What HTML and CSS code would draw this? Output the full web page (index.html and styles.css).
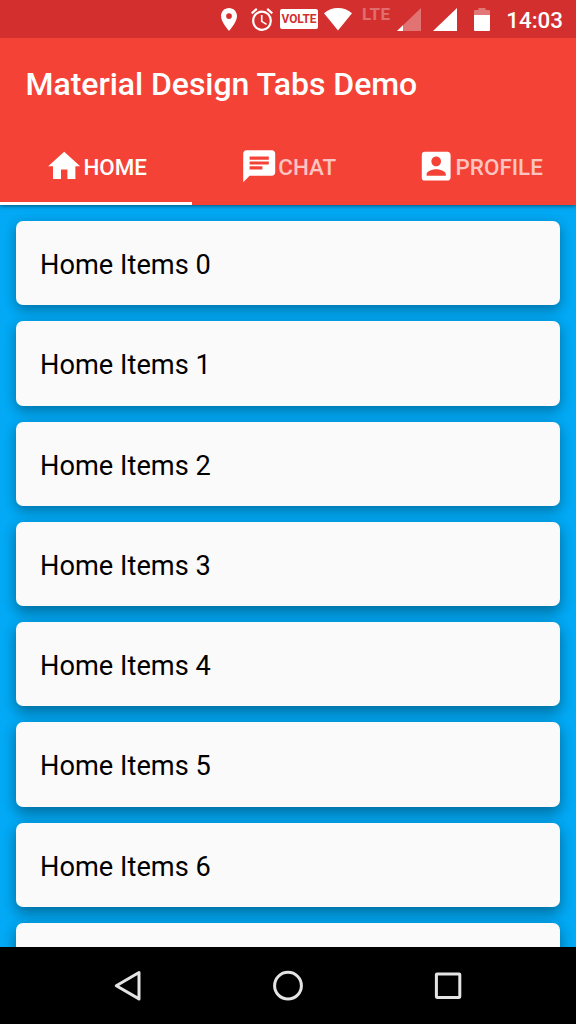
FILE: index.html
```html
<!DOCTYPE html>
<html lang="en">
<head>
<meta charset="utf-8">
<title>Material Design Tabs Demo</title>
<link rel="stylesheet" href="styles.css">
</head>
<body>
<div class="status">
  <svg class="pin" width="16" height="23" viewBox="5 2 14 20" preserveAspectRatio="none"><path fill="#fff" d="M12 2C8.13 2 5 5.13 5 9c0 5.25 7 13 7 13s7-7.75 7-13c0-3.87-3.13-7-7-7zm0 9.500a2.500 2.500 0 0 1 0-5 2.500 2.500 0 0 1 0 5z"/></svg>
  <svg class="alarm" width="22" height="23" viewBox="2 1.860 20 20.140" preserveAspectRatio="none"><path fill="#fff" d="M22 5.720l-4.600-3.860-1.290 1.530 4.600 3.860L22 5.720zM7.880 3.390L6.600 1.860 2 5.710l1.290 1.530 4.590-3.850zM12.500 8H11v6l4.750 2.850.75-1.230-4-2.370V8zM12 4c-4.970 0-9 4.030-9 9s4.020 9 9 9a9 9 0 0 0 0-18zm0 16c-3.870 0-7-3.130-7-7s3.130-7 7-7 7 3.130 7 7-3.130 7-7 7z"/></svg>
  <span class="volte">VOLTE</span>
  <svg class="wifi" width="28" height="23" viewBox="0 0 28 23"><path fill="#fff" d="M0 5.300Q6 .1 14 .1T28 5.300L14 22.600z"/></svg>
  <span class="lte">LTE</span>
  <svg class="signal" width="24" height="23" viewBox="0 0 24 23"><path fill="#fff" fill-opacity=".33" d="M0 23L24 0v23z"/><path fill="#fff" d="M0 23l6-5.750V23z"/></svg>
  <svg class="signal" width="24" height="23" viewBox="0 0 24 23"><path fill="#fff" d="M0 23L24 0v23z"/></svg>
  <svg class="battery" width="16" height="23" viewBox="0 0 16 23"><path fill="#fff" fill-opacity=".35" d="M0 7V3Q0 2 1 2H4.500V0h7v2H15q1 0 1 1V7z"/><path fill="#fff" d="M0 7h16v15q0 1-1 1H1q-1 0-1-1z"/></svg>
  <span class="clock">14:03</span>
</div>
<header class="appbar">
  <h1 class="title">Material Design Tabs Demo</h1>
  <nav class="tabs">
    <a class="tab active"><svg class="icon" viewBox="0 0 24 24"><path d="M10 20v-6h4v6h5v-8h3L12 3 2 12h3v8z"/></svg><span>HOME</span></a>
    <a class="tab"><svg class="icon" viewBox="0 0 24 24"><path d="M20 2H4c-1.100 0-1.990.9-1.990 2L2 22l4-4h14c1.100 0 2-.9 2-2V4c0-1.100-.9-2-2-2zM6 9h12v2H6V9zm8 5H6v-2h8v2zm4-6H6V6h12v2z"/></svg><span>CHAT</span></a>
    <a class="tab"><svg class="icon" viewBox="0 0 24 24"><path d="M3 5v14a2 2 0 0 0 2 2h14c1.100 0 2-.9 2-2V5c0-1.100-.9-2-2-2H5a2 2 0 0 0-2 2zm12 4c0 1.660-1.340 3-3 3s-3-1.340-3-3 1.340-3 3-3 3 1.340 3 3zm-9 8c0-2 4-3.100 6-3.100s6 1.100 6 3.100v1H6v-1z"/></svg><span>PROFILE</span></a>
  </nav>
</header>
<main class="list">
  <div class="card">Home Items 0</div>
  <div class="card">Home Items 1</div>
  <div class="card">Home Items 2</div>
  <div class="card">Home Items 3</div>
  <div class="card">Home Items 4</div>
  <div class="card">Home Items 5</div>
  <div class="card">Home Items 6</div>
  <div class="card"></div>
</main>
<footer class="navbar">
  <svg width="32" height="32" viewBox="0 0 32 32"><path d="M4.300 15.700L27 2.500v26.400z"/></svg>
  <svg width="32" height="32" viewBox="0 0 32 32"><circle cx="16" cy="15.700" r="13.400"/></svg>
  <svg width="32" height="32" viewBox="0 0 32 32"><rect x="4.400" y="4" width="23.400" height="23.400" rx=".6"/></svg>
</footer>
</body>
</html>
```
FILE: styles.css
```css
* { box-sizing: border-box; }

body {
  margin: 0;
  width: 576px;
  height: 1024px;
  overflow: hidden;
  display: flex;
  flex-direction: column;
  font-family: Roboto, "Liberation Sans", sans-serif;
  background: #03a9f4;
}

svg { display: block; flex: none; }

.status {
  flex: none;
  height: 38px;
  padding: 8px 13px 0 0;
  display: flex;
  justify-content: flex-end;
  align-items: flex-start;
  background: #d32f2f;
  color: #fff;
  z-index: 2;
}

.alarm { margin-left: 14px; }

.volte {
  width: 38px;
  height: 20px;
  margin: 1px 6px 0 7px;
  border-radius: 2px;
  background: #fff;
  color: #d32f2f;
  font-size: 11.900px;
  font-weight: 700;
  line-height: 20px;
  text-align: center;
}

.lte {
  width: 28px;
  margin-left: 10px;
  font-size: 17px;
  font-weight: 700;
  letter-spacing: .3px;
  line-height: 13px;
  opacity: .3;
}

.signal { margin-left: 7px; }
.signal + .signal { margin-left: 12px; }
.battery { margin-left: 17px; }

.clock {
  width: 57px;
  margin-left: 16px;
  font-size: 22.400px;
  font-weight: 500;
  line-height: 25px;
  text-align: right;
}

.appbar {
  flex: none;
  height: 167px;
  display: flex;
  flex-direction: column;
  background: #f44336;
  color: #fff;
  box-shadow: 0 1px 4px rgba(0, 0, 0, .5);
  z-index: 1;
}

.title {
  height: 90px;
  margin: 0;
  padding-left: 25.600px;
  font-size: 32px;
  font-weight: 500;
  letter-spacing: -.05px;
  line-height: 93px;
}

.tabs {
  flex: 1;
  display: grid;
  grid-template-columns: repeat(3, 1fr);
}

.tab {
  display: flex;
  justify-content: center;
  align-items: center;
  padding-top: 3px;
  border-bottom: 3px solid transparent;
  color: rgba(255, 255, 255, .7);
  font-size: 22.400px;
  font-weight: 500;
}

.tab.active {
  color: #fff;
  border-bottom-color: #fff;
}

.tab span { padding-top: 1px; }

.icon {
  width: 38.400px;
  height: 38.400px;
  fill: #fff;
}

.list {
  flex: 1;
  min-height: 0;
  overflow: hidden;
  padding: 16px 16px 0;
  display: flex;
  flex-direction: column;
  gap: 16px;
}

.card {
  flex: none;
  height: 84.250px;
  padding-left: 24px;
  border-radius: 7px;
  background: #fafafa;
  color: #000;
  font-size: 27.200px;
  letter-spacing: .03px;
  line-height: 88.500px;
  box-shadow: 0 5px 12px rgba(0, 0, 0, .25), 0 2px 14px rgba(0, 0, 0, .1);
}

/* Shadows deepen for cards further from the top of the screen. */
.card:nth-child(n + 4) {
  box-shadow: 0 7px 13px rgba(0, 0, 0, .28), 0 2px 14px rgba(0, 0, 0, .12);
}

.navbar {
  flex: none;
  height: 77px;
  display: grid;
  grid-template-columns: repeat(3, 160px);
  justify-content: center;
  justify-items: center;
  align-items: center;
  background: #000;
  z-index: 1;
}

.navbar svg {
  fill: none;
  stroke: #e4e4e4;
  stroke-width: 3;
  stroke-linejoin: round;
}
```
